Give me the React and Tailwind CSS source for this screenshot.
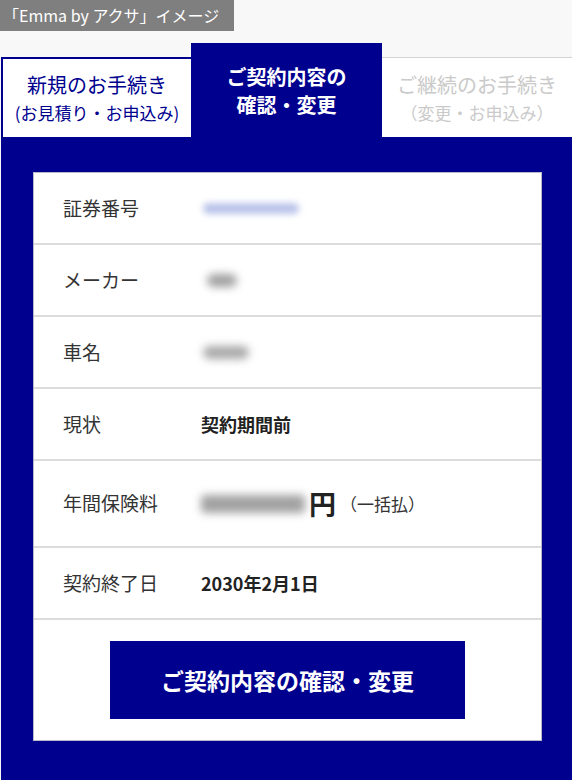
const NAVY = "bg-[#00008f]";

const rows = [
  { label: "証券番号", kind: "blue" },
  { label: "メーカー", kind: "maker" },
  { label: "車名", kind: "car" },
  { label: "現状", value: "契約期間前" },
  { label: "年間保険料", kind: "fee" },
  { label: "契約終了日", value: "2030年2月1日" },
];

function Value({ row }) {
  if (row.value) {
    return <span className="text-[18px] font-bold text-[#222]">{row.value}</span>;
  }
  if (row.kind === "blue") {
    return <span className="ml-[2px] block h-[11px] w-[96px] rounded-full bg-[#bac4ea] blur-[3px]" />;
  }
  if (row.kind === "maker") {
    return <span className="ml-[6px] block h-[13px] w-[30px] rounded-full bg-[#a0a0a0] blur-[4px]" />;
  }
  if (row.kind === "car") {
    return <span className="ml-[2px] block h-[13px] w-[46px] rounded-full bg-[#a8a8a8] blur-[4px]" />;
  }
  return (
    <div className="flex items-center">
      <span className="block h-[18px] w-[104px] rounded bg-[#a2a2a2] blur-[4px]" />
      <span className="ml-[4px] text-[27px] font-bold leading-none text-[#222]">円</span>
      <span className="ml-[4px] text-[17px] text-[#333]">（一括払）</span>
    </div>
  );
}

export default function App() {
  return (
    <div
      className="flex h-[780px] w-[572px] flex-col bg-[#f8f8f8]"
      style={{ fontFamily: '"Noto Sans CJK JP", "Noto Sans", sans-serif' }}
    >
      <div className="h-[31px] w-[234px] bg-[#7f7f7f] pl-[3px] text-[16px] leading-[31px] text-white">
        「Emma by アクサ」イメージ
      </div>

      <div className="mt-[12px] flex h-[94px] items-end pl-[1px]">
        <div className="flex h-[80px] w-[190px] flex-col items-center justify-center border-l-2 border-t-2 border-[#00008f] bg-white pt-[2px] text-[#00008f]">
          <span className="text-[20px] leading-[28px]">新規のお手続き</span>
          <span className="text-[17px] leading-[28px]">(お見積り・お申込み)</span>
        </div>
        <div className={`flex h-[94px] w-[191px] flex-col items-center justify-center pt-[2px] text-white ${NAVY}`}>
          <span className="text-[20px] font-bold leading-[28px]">ご契約内容の</span>
          <span className="text-[20px] font-bold leading-[28px]">確認・変更</span>
        </div>
        <div className="flex h-[80px] flex-1 flex-col items-center justify-center border-t border-[#d4d4d4] bg-white pt-[2px] text-[#cacaca]">
          <span className="text-[20px] leading-[28px]">ご継続のお手続き</span>
          <span className="text-[17px] leading-[28px]">（変更・お申込み）</span>
        </div>
      </div>

      <div className={`ml-[1px] flex-1 pb-[35px] pl-[32px] pr-[30px] pt-[35px] ${NAVY}`}>
        <div className="border border-[#b8b8c8] bg-white">
          {rows.map((row) => (
            <div
              key={row.label}
              className={`flex items-center border-b-2 border-[#dcdcdc] pl-[29px] ${
                row.kind === "fee" ? "h-[87px]" : "h-[72px]"
              }`}
            >
              <span className="w-[138px] text-[19px] text-[#333]">{row.label}</span>
              <Value row={row} />
            </div>
          ))}
          <div className="flex justify-center pb-[21px] pt-[21px]">
            <button
              type="button"
              className={`h-[78px] w-[355px] text-[23px] font-bold text-white ${NAVY}`}
            >
              ご契約内容の確認・変更
            </button>
          </div>
        </div>
      </div>
    </div>
  );
}
